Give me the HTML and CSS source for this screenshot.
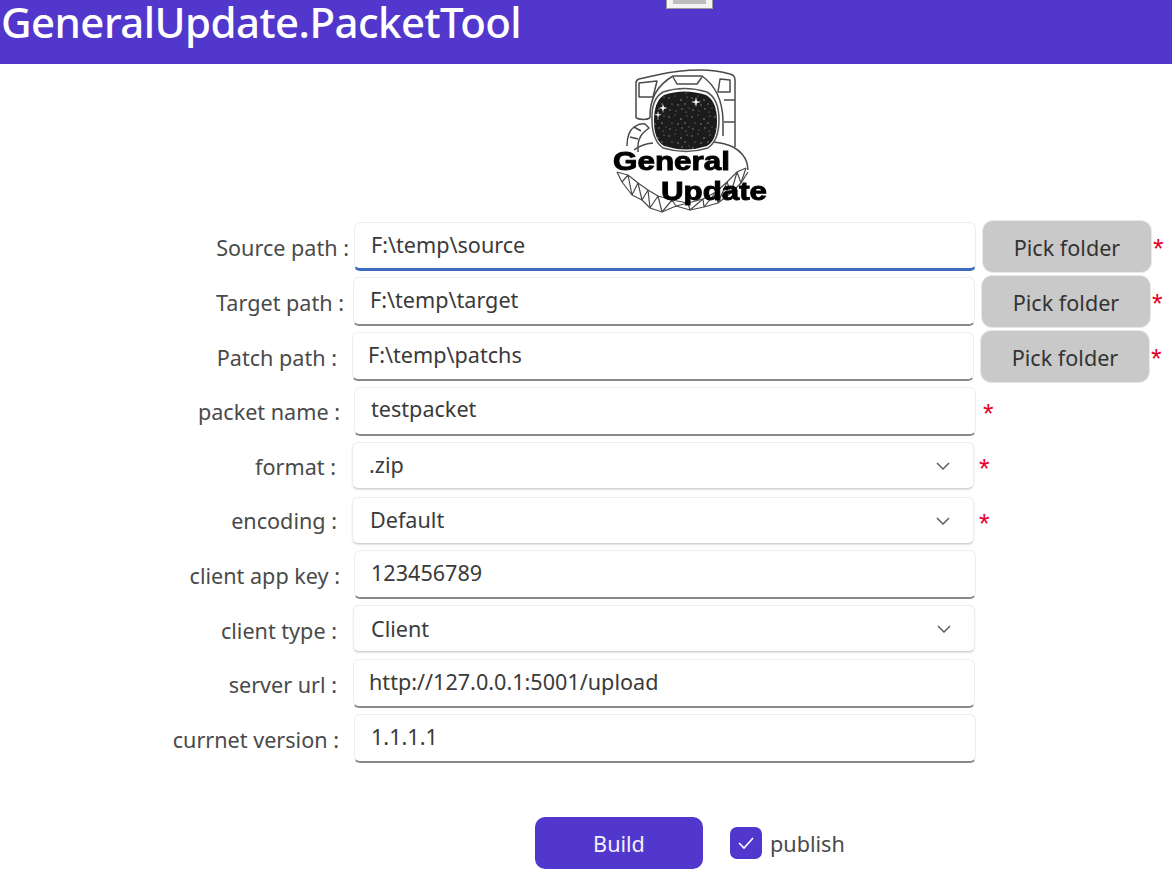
FILE: index.html
```html
<!DOCTYPE html>
<html lang="en">
<head>
<meta charset="utf-8">
<title>GeneralUpdate.PacketTool</title>
<link rel="stylesheet" href="styles.css">
</head>
<body>
<header class="header">
  <h1 class="title">GeneralUpdate.PacketTool</h1>
  <div class="tab"><span class="tab-inner"></span></div>
</header>
<main class="page">
  <div class="logo">
    <svg class="logo-svg" viewBox="605 66 170 150" width="170" height="150">
      <defs>
        <pattern id="stars" width="23" height="19" patternUnits="userSpaceOnUse">
          <g fill="#9a9a9a">
            <circle cx="2" cy="3" r=".7"/><circle cx="8" cy="1" r=".5"/><circle cx="14" cy="5" r=".8"/><circle cx="20" cy="2" r=".6"/>
            <circle cx="5" cy="9" r=".6"/><circle cx="11" cy="10" r=".7"/><circle cx="18" cy="9" r=".7"/><circle cx="22" cy="13" r=".5"/>
            <circle cx="3" cy="15" r=".7"/><circle cx="9" cy="16" r=".5"/><circle cx="15" cy="14" r=".7"/><circle cx="19" cy="17" r=".6"/>
          </g>
        </pattern>
      </defs>
      <g fill="none" stroke="#4a4a4a" stroke-width="1.5" stroke-linejoin="round">
        <path d="M636 118V83q0-3 3-4l18-4q22-5 43-5 16 0 30 4 5 1 5 6v67"/>
        <path d="M639 83l18-2-4 16h-14zM720 79l10 1v12h-12z"/>
        <path d="M636 118q8 3 14 0"/>
        <path d="M724 100h11M724 122h11"/>
        <path d="M650 118q-1-28 23-42h29q20 14 21 44v16"/>
        <path d="M673 77l4 7h20l5-7"/>
        <path d="M627 146q0-14 7-19 6-4 11-3l4 4-6 5q-5 6-5 13v6"/>
        <path d="M634 127l7 4M630 137l8 2"/>
        <path d="M634 150q8-6 19-7M713 142q12 1 20 5 11 6 14 16l1 7"/>
      </g>
      <g fill="none" stroke="#4a4a4a" stroke-width="1.2" stroke-linejoin="round">
        <path d="M617 172l11 3 10 8 10 7 10 6 14 4 16 3 15-4 13-7 11-10 10-10 9-4"/>
        <path d="M617 172l5 10 10 13 10 5 8 8 12 4 14-6 14 4 14-3 14-4 13-10 10-10 7-11"/>
        <path d="M628 175l-6 7M628 175l4 20M638 183l-6 12M638 183l4 17M648 190l-6 10M648 190l2 18M658 196l-8 12M658 196l4 16M672 200l-10 12M672 200l4 6M688 203l-12 3M688 203l2 7M703 199l-13 11M703 199l1 8M716 192l-12 15M716 192l2 11M727 182l-9 21M727 182l4 11M737 172l-6 21M737 172l4 11M746 168l-5 15"/>
      </g>
      <path d="M652 120q-1-21 11-28 21-7 44 0 12 7 12 28 0 20-11 28-22 7-45 0-11-8-11-28z" fill="#fff" stroke="#555" stroke-width="1.5"/>
      <path d="M654 121q0-20 10-26 20-7 42 0 11 6 11 26 0 19-10 25-21 7-43 0-10-6-10-25z" fill="#1c1c1c"/>
      <path d="M654 121q0-20 10-26 20-7 42 0 11 6 11 26 0 19-10 25-21 7-43 0-10-6-10-25z" fill="url(#stars)"/>
      <path d="M696 97l1 4 4 1-4 1-1 4-1-4-4-1 4-1zM663 104l1 3 3 1-3 1-1 3-1-3-3-1 3-1zM658 111l.8 3 3 .8-3 .8-.8 3-.8-3-3-.8 3-.8z" fill="#eee"/>
      <g class="logo-text">
        <text x="613" y="170" textLength="117" lengthAdjust="spacingAndGlyphs">General</text>
        <text x="661" y="200" textLength="106" lengthAdjust="spacingAndGlyphs">Update</text>
      </g>
    </svg>
  </div>

  <form class="form">
    <div class="row row-1">
      <label class="label">Source path :</label>
      <div class="field field-focus">F:\temp\source</div>
      <button type="button" class="pick">Pick folder</button>
      <span class="star">*</span>
    </div>
    <div class="row row-2">
      <label class="label">Target path :</label>
      <div class="field">F:\temp\target</div>
      <button type="button" class="pick">Pick folder</button>
      <span class="star">*</span>
    </div>
    <div class="row row-3">
      <label class="label">Patch path :</label>
      <div class="field">F:\temp\patchs</div>
      <button type="button" class="pick">Pick folder</button>
      <span class="star">*</span>
    </div>
    <div class="row row-4">
      <label class="label">packet name :</label>
      <div class="field">testpacket</div>
      <span class="star star-near">*</span>
    </div>
    <div class="row row-5">
      <label class="label">format :</label>
      <div class="field field-select">.zip
        <svg class="chev" viewBox="0 0 14 8" width="14" height="8"><path d="M1 1l6 6 6-6" fill="none" stroke="#5f5f5f" stroke-width="1.5"/></svg>
      </div>
      <span class="star star-near">*</span>
    </div>
    <div class="row row-6">
      <label class="label">encoding :</label>
      <div class="field field-select">Default
        <svg class="chev" viewBox="0 0 14 8" width="14" height="8"><path d="M1 1l6 6 6-6" fill="none" stroke="#5f5f5f" stroke-width="1.5"/></svg>
      </div>
      <span class="star star-near">*</span>
    </div>
    <div class="row row-7">
      <label class="label">client app key :</label>
      <div class="field">123456789</div>
    </div>
    <div class="row row-8">
      <label class="label">client type :</label>
      <div class="field field-select">Client
        <svg class="chev" viewBox="0 0 14 8" width="14" height="8"><path d="M1 1l6 6 6-6" fill="none" stroke="#5f5f5f" stroke-width="1.5"/></svg>
      </div>
    </div>
    <div class="row row-9">
      <label class="label">server url :</label>
      <div class="field">http://127.0.0.1:5001/upload</div>
    </div>
    <div class="row row-10">
      <label class="label">currnet version :</label>
      <div class="field">1.1.1.1</div>
    </div>
  </form>

  <div class="actions">
    <button type="button" class="build">Build</button>
    <span class="check">
      <svg viewBox="0 0 18 14" width="18" height="14"><path d="M2 7l5 5 9-10" fill="none" stroke="#fff" stroke-width="1.6"/></svg>
    </span>
    <span class="publish">publish</span>
  </div>
</main>
</body>
</html>
```
FILE: styles.css
```css
* { box-sizing: border-box; }
html, body { margin: 0; padding: 0; }
body {
  width: 1172px;
  height: 874px;
  overflow: hidden;
  background: #fff;
  font-family: "Noto Sans", "Open Sans", sans-serif;
  color: #3d3d3d;
}
.header {
  position: relative;
  height: 64px;
  background: #5237cc;
  overflow: hidden;
}
.title {
  margin: 0;
  padding-left: 1px;
  font-size: 42px;
  font-weight: 500;
  line-height: 44px;
  color: #fff;
  letter-spacing: -0.55px;
}
.tab {
  position: absolute;
  left: 666px;
  top: -6px;
  width: 47px;
  height: 15px;
  background: #f4f4f4;
  border: 1px solid #999;
  padding: 3px 6px 4px;
}
.tab-inner { display: block; height: 100%; background: #bdbdbd; }
.page { display: flex; flex-direction: column; }
.logo { display: flex; height: 158px; padding: 2px 0 0 605px; }
.logo-svg { display: block; filter: blur(0.35px); }
.logo-text {
  font-family: "Liberation Sans", Arial, sans-serif;
  font-weight: 700;
  font-size: 25px;
  fill: #000;
  stroke: #000;
  stroke-width: 0.9px;
}
.form { display: flex; flex-direction: column; }
.row {
  --shift: 0px;
  --label-gap: 5px;
  --label-top: 11px;
  --pad: 16px;
  --pad-top: 7px;
  --star-top: 12px;
  display: flex;
  align-items: flex-start;
  height: 49px;
  margin-left: var(--shift);
  margin-bottom: 6px;
}
.row-1 { --shift: 2px; --label-gap: 5px; }
.row-2 { --shift: 1px; --label-gap: 9px; }
.row-3 { --shift: 0px; --label-gap: 15px; --pad: 15px; }
.row-4 { --shift: 2px; --label-gap: 14px; --label-top: 10px; --pad-top: 6px; }
.row-5 { --shift: 0px; --label-gap: 16px; --label-top: 10px; }
.row-6 { --shift: 0px; --label-gap: 15px; --label-top: 9px; --pad: 17px; margin-bottom: 4px; }
.row-7 { --shift: 2px; --label-gap: 14px; }
.row-8 { --shift: 1px; --label-gap: 16px; --pad: 17px; --pad-top: 8px; margin-bottom: 5px; }
.row-9 { --shift: 1px; --label-gap: 16px; --pad: 15px; }
.row-10 { --shift: 2px; --label-gap: 15px; }
.label {
  flex: none;
  width: 352px;
  padding-right: var(--label-gap);
  padding-top: var(--label-top);
  text-align: right;
  font-size: 21.6px;
  line-height: 30px;
  color: #4a4a4a;
}
.field {
  flex: none;
  position: relative;
  width: 622px;
  height: 49px;
  padding: var(--pad-top) var(--pad) 0;
  background: #fff;
  border: 1px solid #eeeeee;
  border-bottom: 2px solid #8a8a8a;
  border-radius: 6px;
  font-size: 21.6px;
  line-height: 30px;
  color: #3a3a3a;
}
.field-focus { border-bottom: 3px solid #3c6bbd; }
.field-select {
  border-bottom: 1px solid #d2d2d2;
  height: 47px;
  box-shadow: 0 1px 2px rgba(0, 0, 0, 0.12);
}
.chev { position: absolute; right: 23px; top: 19px; }
.pick {
  flex: none;
  width: 170px;
  height: 53px;
  margin: -2px 0 0 6px;
  padding: 2px 0 0;
  border: 1px solid #e8e8e8;
  border-radius: 11px;
  background: #c9c9c9;
  font-family: inherit;
  font-size: 21.6px;
  color: #333;
}
.star {
  flex: none;
  margin-left: 1px;
  padding-top: var(--star-top);
  color: #e8002a;
  font-size: 27px;
  line-height: 30px;
  font-family: "Liberation Sans", sans-serif;
}
.star-near { margin-left: 7px; }
.row-5 .star-near, .row-6 .star-near { margin-left: 5px; }
.actions {
  display: flex;
  align-items: center;
  margin: 48px 0 0 535px;
}
.build {
  width: 168px;
  height: 52px;
  padding: 0;
  border: none;
  border-radius: 10px;
  background: #5237cc;
  color: #f2f0fc;
  font-family: inherit;
  font-size: 21.6px;
}
.check {
  display: flex;
  align-items: center;
  justify-content: center;
  width: 32px;
  height: 32px;
  margin-left: 27px;
  border-radius: 7px;
  background: #5237cc;
}
.publish { margin-left: 8px; font-size: 21.6px; color: #4a4a4a; }
```
